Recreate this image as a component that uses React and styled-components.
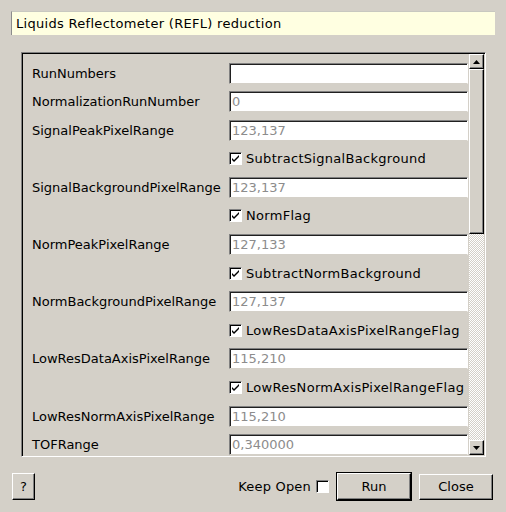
import React from "react";
import styled, { createGlobalStyle } from "styled-components";

const GlobalStyle = createGlobalStyle`
  html, body {
    margin: 0;
    padding: 0;
    background: #d4d0c8;
  }
  body {
    font-family: "DejaVu Sans", "Liberation Sans", sans-serif;
    font-size: 13px;
    color: #000;
  }
`;

const rows = [
  { label: "RunNumbers", value: "" },
  { label: "NormalizationRunNumber", value: "0" },
  { label: "SignalPeakPixelRange", value: "123,137" },
  { check: "SubtractSignalBackground" },
  { label: "SignalBackgroundPixelRange", value: "123,137" },
  { check: "NormFlag" },
  { label: "NormPeakPixelRange", value: "127,133" },
  { check: "SubtractNormBackground" },
  { label: "NormBackgroundPixelRange", value: "127,137" },
  { check: "LowResDataAxisPixelRangeFlag" },
  { label: "LowResDataAxisPixelRange", value: "115,210" },
  { check: "LowResNormAxisPixelRangeFlag" },
  { label: "LowResNormAxisPixelRange", value: "115,210" },
  { label: "TOFRange", value: "0,340000" },
];

const Dialog = styled.div`
  width: 506px;
  height: 512px;
  box-sizing: border-box;
  padding: 11px 11px 0;
  display: flex;
  flex-direction: column;
`;

const Header = styled.div`
  height: 24px;
  box-sizing: border-box;
  background: #ffffe1;
  border-left: 1px solid #8c8c8c;
  border-top: 1px solid #c8c8c0;
  padding-left: 4px;
  display: flex;
  align-items: center;
  letter-spacing: 0.3px;
`;

const Frame = styled.div`
  margin: 17px 9px 0 10px;
  height: 405px;
  box-sizing: border-box;
  border: 1px solid;
  border-color: #808080 #fff #fff #808080;
  box-shadow: inset 1px 1px 0 #000, inset -1px -1px 0 #d4d0c8;
  padding: 1px;
  display: flex;
  overflow: hidden;
`;

const Viewport = styled.div`
  flex: 1;
  overflow: hidden;
  padding: 8.5px 1px 0 9px;
  display: grid;
  grid-template-columns: 197px 1fr;
  grid-auto-rows: 21px;
  row-gap: 7.6px;
  align-items: center;
`;

const Label = styled.div`
  white-space: nowrap;
`;

const Field = styled.div`
  height: 21px;
  box-sizing: border-box;
  background: #fff;
  border: 1px solid;
  border-color: #808080 #fff #d4d0c8 #808080;
  box-shadow: inset 1px 1px 0 #202020;
  padding: 0 0 0 2px;
  display: flex;
  align-items: center;
  color: #8c8c8c;
  white-space: nowrap;
`;

const CheckRow = styled.label`
  grid-column: 2;
  display: flex;
  align-items: center;
  gap: 4px;
  white-space: nowrap;
  letter-spacing: 0.3px;
`;

const Box = styled.span`
  width: 13px;
  height: 13px;
  box-sizing: border-box;
  background: #fff;
  border: 1px solid;
  border-color: #808080 #fff #fff #808080;
  box-shadow: inset 1px 1px 0 #000;
  display: flex;
  align-items: center;
  justify-content: center;
  flex-shrink: 0;
`;

const Scrollbar = styled.div`
  width: 15px;
  display: flex;
  flex-direction: column;
`;

const Raised = styled.div`
  box-sizing: border-box;
  background: #d4d0c8;
  border: 1px solid;
  border-color: #fff #000 #000 #fff;
  box-shadow: inset -1px -1px 0 #808080;
  display: flex;
  align-items: center;
  justify-content: center;
`;

const ArrowButton = styled(Raised)`
  height: 15px;
`;

const Thumb = styled(Raised)`
  height: ${(p) => p.size}px;
`;

const Trough = styled.div`
  flex: 1;
  background: repeating-conic-gradient(#fff 0 25%, #d4d0c8 0 50%);
  background-size: 2px 2px;
`;

const Footer = styled.div`
  margin-top: 15px;
  height: 29px;
  padding: 0 2px 0 1px;
  display: flex;
  align-items: center;
`;

const Button = styled(Raised)`
  width: ${(p) => p.w}px;
  height: ${(p) => p.h}px;
  outline: ${(p) => (p.primary ? "1px solid #000" : "none")};
  margin: ${(p) => (p.primary ? "0 1px" : "0")};
`;

const Spacer = styled.div`
  flex: 1;
`;

const KeepOpen = styled.label`
  display: flex;
  align-items: center;
  gap: 5px;
  margin-right: 7px;
  letter-spacing: 0.2px;
`;

const ButtonGroup = styled.div`
  display: flex;
  align-items: center;
  gap: 7px;
`;

const Check = () => (
  <svg width="9" height="9" viewBox="0 0 9 9">
    <path d="M1 4 L3 6 L8 1 L8 3 L3 8 L1 6 Z" fill="#000" />
  </svg>
);

const Arrow = ({ down }) => (
  <svg width="7" height="4" viewBox="0 0 7 4">
    <path d={down ? "M0 0 H7 L3.5 4 Z" : "M0 4 H7 L3.5 0 Z"} fill="#000" />
  </svg>
);

export default function App() {
  return (
    <Dialog>
      <GlobalStyle />
      <Header>Liquids Reflectometer (REFL) reduction</Header>
      <Frame>
        <Viewport>
          {rows.map((r, i) =>
            r.check ? (
              <CheckRow key={i}>
                <Box>
                  <Check />
                </Box>
                {r.check}
              </CheckRow>
            ) : (
              <React.Fragment key={i}>
                <Label>{r.label}</Label>
                <Field>{r.value}</Field>
              </React.Fragment>
            )
          )}
        </Viewport>
        <Scrollbar>
          <ArrowButton>
            <Arrow />
          </ArrowButton>
          <Thumb size={165} />
          <Trough />
          <ArrowButton>
            <Arrow down />
          </ArrowButton>
        </Scrollbar>
      </Frame>
      <Footer>
        <Button w={23} h={27}>?</Button>
        <Spacer />
        <KeepOpen>
          Keep Open
          <Box />
        </KeepOpen>
        <ButtonGroup>
          <Button primary w={74} h={27}>Run</Button>
          <Button w={74} h={26}>Close</Button>
        </ButtonGroup>
      </Footer>
    </Dialog>
  );
}
